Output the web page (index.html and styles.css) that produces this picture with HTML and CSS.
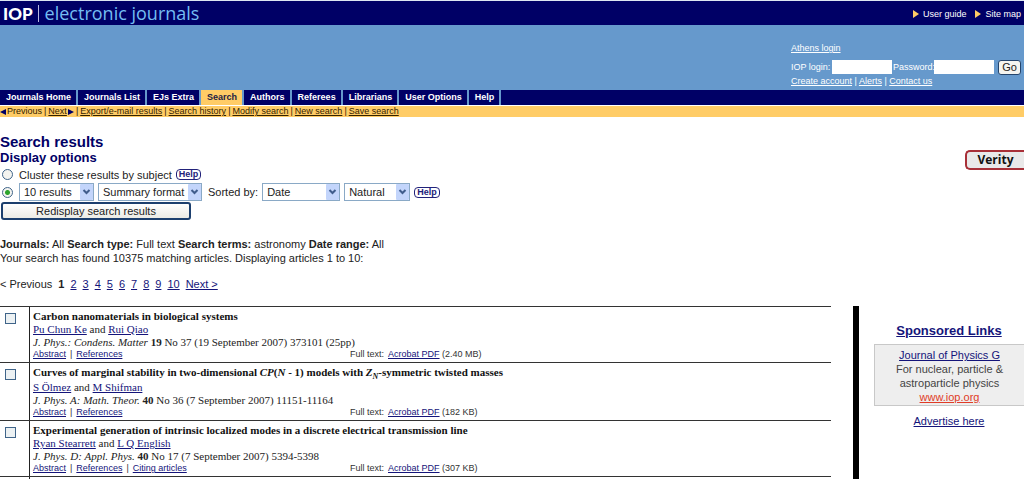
FILE: index.html
```html
<!DOCTYPE html>
<html lang="en">
<head>
<meta charset="utf-8">
<title>IOP electronic journals - Search results</title>
<link rel="stylesheet" href="styles.css">
</head>
<body>
<header>
  <div class="brandbar">
    <div class="brand"><strong class="iop">IOP</strong><span class="brand-name">electronic journals</span></div>
    <div class="toplinks">
      <a href="#"><svg class="tri" viewBox="0 0 6 8"><path d="M0 0L6 4L0 8Z"/></svg>User guide</a>
      <a href="#"><svg class="tri" viewBox="0 0 6 8"><path d="M0 0L6 4L0 8Z"/></svg>Site map</a>
    </div>
  </div>
  <div class="banner">
    <form class="login">
      <div><a href="#">Athens login</a></div>
      <div class="login-row">
        <label for="user">IOP login:</label><input id="user" type="text">
        <label class="pw" for="pass">Password:</label><input id="pass" type="password">
        <button type="button" class="go">Go</button>
      </div>
      <div class="login-links"><a href="#">Create account</a> | <a href="#">Alerts</a> | <a href="#">Contact us</a></div>
    </form>
  </div>
  <nav class="tabs">
    <a href="#">Journals Home</a><a href="#">Journals List</a><a href="#">EJs Extra</a><a href="#" class="active">Search</a><a href="#">Authors</a><a href="#">Referees</a><a href="#">Librarians</a><a href="#">User Options</a><a href="#">Help</a>
  </nav>
  <nav class="subnav">
    <svg class="arrow" viewBox="0 0 6 6"><path d="M6 0L0 3L6 6Z"/></svg><span>Previous</span><i>|</i><a href="#">Next</a><svg class="arrow" viewBox="0 0 6 6"><path d="M0 0L6 3L0 6Z"/></svg><i>|</i><a href="#">Export/e-mail results</a><i>|</i><a href="#">Search history</a><i>|</i><a href="#">Modify search</a><i>|</i><a href="#">New search</a><i>|</i><a href="#">Save search</a>
  </nav>
</header>

<main>
  <div class="top">
    <form class="options">
      <h1>Search results</h1>
      <h2>Display options</h2>
      <div class="opt cluster">
        <input type="radio" name="mode" id="m1"><label for="m1">Cluster these results by subject</label>
        <a href="#" class="help">Help</a>
      </div>
      <div class="opt">
        <input type="radio" name="mode" id="m2" aria-label="List results" checked>
        <select class="s-count" aria-label="Results per page"><option>10 results</option></select>
        <select class="s-format" aria-label="Format"><option>Summary format</option></select>
        <label class="sorted" for="sort">Sorted by:</label>
        <select class="s-sort" id="sort"><option>Date</option></select>
        <select class="s-order" aria-label="Order"><option>Natural</option></select>
        <a href="#" class="help">Help</a>
      </div>
      <button type="button" class="redisplay">Redisplay search results</button>
    </form>
    <a href="#" class="verity">Verity</a>
  </div>

  <div class="summary">
    <p><b>Journals:</b> All <b>Search type:</b> Full text <b>Search terms:</b> astronomy <b>Date range:</b> All</p>
    <p>Your search has found 10375 matching articles. Displaying articles 1 to 10:</p>
  </div>
  <nav class="pager">
    <span>&lt; Previous</span><b>1</b><a href="#">2</a><a href="#">3</a><a href="#">4</a><a href="#">5</a><a href="#">6</a><a href="#">7</a><a href="#">8</a><a href="#">9</a><a href="#">10</a><a href="#">Next &gt;</a>
  </nav>

  <div class="columns">
    <div class="results">
      <article>
        <div class="pick"><input type="checkbox" aria-label="Select article 1"></div>
        <div class="entry">
          <h3>Carbon nanomaterials in biological systems</h3>
          <p><a href="#">Pu Chun Ke</a> and <a href="#">Rui Qiao</a></p>
          <p class="cite"><em>J. Phys.: Condens. Matter</em> <b>19</b> No 37 (19 September 2007) 373101 (25pp)</p>
          <div class="meta"><div class="links"><a href="#">Abstract</a><i>|</i><a href="#">References</a></div><div><span class="ft">Full text:</span><a href="#">Acrobat PDF</a> (2.40 MB)</div></div>
        </div>
      </article>
      <article>
        <div class="pick"><input type="checkbox" aria-label="Select article 2"></div>
        <div class="entry">
          <h3 class="formula">Curves of marginal stability in two-dimensional <em>CP</em>(<em>N</em> - 1) models with <em>Z<sub>N</sub></em>-symmetric twisted masses</h3>
          <p><a href="#">S Ölmez</a> and <a href="#">M Shifman</a></p>
          <p class="cite"><em>J. Phys. A: Math. Theor.</em> <b>40</b> No 36 (7 September 2007) 11151-11164</p>
          <div class="meta"><div class="links"><a href="#">Abstract</a><i>|</i><a href="#">References</a></div><div><span class="ft">Full text:</span><a href="#">Acrobat PDF</a> (182 KB)</div></div>
        </div>
      </article>
      <article>
        <div class="pick"><input type="checkbox" aria-label="Select article 3"></div>
        <div class="entry">
          <h3>Experimental generation of intrinsic localized modes in a discrete electrical transmission line</h3>
          <p><a href="#">Ryan Stearrett</a> and <a href="#">L Q English</a></p>
          <p class="cite"><em>J. Phys. D: Appl. Phys.</em> <b>40</b> No 17 (7 September 2007) 5394-5398</p>
          <div class="meta"><div class="links"><a href="#">Abstract</a><i>|</i><a href="#">References</a><i>|</i><a href="#">Citing articles</a></div><div><span class="ft">Full text:</span><a href="#">Acrobat PDF</a> (307 KB)</div></div>
        </div>
      </article>
      <div class="more"></div>
    </div>
    <aside>
      <h2><a href="#">Sponsored Links</a></h2>
      <div class="ad"><a href="#">Journal of Physics G</a><br>For nuclear, particle &amp;<br>astroparticle physics<br><a href="#" class="url">www.iop.org</a></div>
      <a href="#">Advertise here</a>
    </aside>
  </div>
</main>
</body>
</html>
```

FILE: styles.css
```css
* { box-sizing: border-box; }
html, body { height: 100%; }
body {
  margin: 0;
  display: flex;
  flex-direction: column;
  overflow: hidden;
  background: #fff;
  color: #222;
  font: 11px/14px "Liberation Sans", Arial, sans-serif;
}
h1, h2, h3, p { margin: 0; }
a { color: #14147a; }
i { font-style: normal; }
input { margin: 0; }

.brandbar {
  display: flex;
  justify-content: space-between;
  align-items: center;
  height: 25px;
  padding: 0 3px 0 3px;
  border-top: 1px solid #dde6f2;
  background: #000066;
}
.brand { display: flex; align-items: center; }
.iop {
  padding-right: 5px;
  border-right: 1px solid #b8b8e0;
  color: #fff;
  font: 900 17px/17px Lato, "Open Sans", sans-serif;
}
.brand-name {
  padding-left: 6px;
  color: #74bdf2;
  font: 18px/22px "Open Sans", sans-serif;
}
.toplinks { display: flex; gap: 9px; padding-top: 2px; font-size: 9px; line-height: 11px; }
.toplinks a { display: flex; align-items: center; color: #fff; text-decoration: none; }
.tri { width: 6px; height: 8px; margin-right: 4px; fill: #ffcc66; }

.banner {
  display: flex;
  justify-content: flex-end;
  height: 65px;
  padding: 18px 3px 0 0;
  background: #6699cc;
}
.login { width: 230px; color: #fff; font-size: 9px; line-height: 10px; }
.login a { color: #fff; }
.login-row { display: flex; align-items: center; height: 18px; margin-top: 5px; }
.login-row input { width: 60px; height: 14px; border: 0; padding: 0 2px; background: #fff; font-size: 9px; }
.login-row label { width: 41px; white-space: nowrap; }
.login-row .pw { width: 42px; padding-left: 1px; }
.go {
  width: 23px;
  height: 15px;
  margin-left: 4px;
  padding: 0;
  border: 1px solid #24446c;
  border-radius: 3px;
  background: #f4f4f0;
  color: #222;
  font: 11px/12px "Liberation Sans", sans-serif;
}

.tabs { display: flex; height: 15px; background: #000066; font-weight: bold; font-size: 9px; line-height: 15px; }
.tabs a {
  padding: 0 5px 0 6px;
  border-right: 2px solid #6699cc;
  color: #fff;
  text-decoration: none;
}
.tabs .active { background: #ffcc66; color: #222244; }
.subnav {
  display: flex;
  align-items: center;
  height: 11px;
  margin-top: 1px;
  background: #ffcc66;
  color: #332200;
  font-size: 9px;
  line-height: 11px;
}
.subnav a { color: #332200; }
.subnav i { margin: 0 2px; }
.arrow { width: 6px; height: 6px; margin: 0 1px 0 0; fill: #000066; }
a + .arrow { margin: 0 0 0 1px; }

main { flex: 1; display: flex; flex-direction: column; min-height: 0; padding-top: 16px; }
.top { display: flex; justify-content: space-between; align-items: flex-start; }
h1 { color: #000066; font-size: 15px; line-height: 17px; }
h2 { color: #000066; font-size: 13px; line-height: 15px; }
.opt { display: flex; align-items: center; height: 18px; gap: 4px; }
.cluster { height: 17px; margin-top: 1px; }
.opt input {
  appearance: none;
  width: 11px;
  height: 11px;
  margin: 0 2px 0 2px;
  border: 1px solid #3f6489;
  border-radius: 50%;
  background: #f4f4f0;
}
.opt input:checked { background: radial-gradient(circle, #2ba32b 0 2px, #f4f4f0 3px); }
select {
  appearance: none;
  height: 18px;
  padding: 0 0 0 4px;
  border: 1px solid #8aa9c6;
  border-radius: 0;
  color: #222;
  font: 11px/14px "Liberation Sans", sans-serif;
  background:
    url("data:image/svg+xml,%3Csvg xmlns='http://www.w3.org/2000/svg' width='13' height='16'%3E%3Crect width='13' height='16' rx='1' fill='%23c3d5fb'/%3E%3Cpath d='M3.5 6L6.500 9L9.500 6' fill='none' stroke='%23405d8c' stroke-width='2'/%3E%3C/svg%3E") right 0 center no-repeat #fff;
}
.s-count { width: 75px; }
.s-format { width: 104px; }
.s-sort { width: 78px; }
.s-order { width: 66px; }
.sorted { margin-left: 2px; }
.help {
  height: 11px;
  padding: 0 2px;
  border: 1px solid #22227a;
  border-radius: 4px;
  color: #22227a;
  font-weight: bold;
  font-size: 9px;
  line-height: 9px;
  text-decoration: none;
}
.redisplay {
  display: block;
  width: 190px;
  height: 18px;
  margin: 1px 0 0 1px;
  padding: 0;
  border: 2px solid #1c3f6e;
  border-radius: 3px;
  background: linear-gradient(#fff, #ecebe5);
  color: #222;
  font: 11px/13px "Liberation Sans", sans-serif;
}
.verity {
  width: 59px;
  margin-top: 17px;
  border: 2px solid #a83038;
  border-right: 0;
  border-radius: 5px 0 0 5px;
  background: #e9e9e9;
  color: #111;
  font: bold 12px/16px "Open Sans", sans-serif;
  text-align: center;
  text-decoration: none;
}

.summary { margin-top: 17px; }
.pager { display: flex; gap: 6px; margin-top: 12px; }

.columns { flex: 1; display: flex; min-height: 0; margin-top: 15px; }
.results {
  flex: 1;
  display: flex;
  flex-direction: column;
  margin-right: 22px;
  font: 11px/13px "Liberation Serif", "Times New Roman", serif;
}
article { display: flex; border-top: 1px solid #333; }
.pick { width: 30px; padding: 6px 0 0 5px; border-right: 1px solid #222; }
.pick input {
  appearance: none;
  display: block;
  width: 11px;
  height: 11px;
  border: 1px solid #3f6489;
  background: #ecf1f3;
}
.entry { flex: 1; padding: 3px 0 2px 3px; }
h3 { color: #111; font-size: 11px; line-height: 13px; }
.formula { padding-bottom: 2px; }
sub { font-size: 8px; line-height: 0; vertical-align: -3px; }
.meta { display: flex; color: #333; font: 9px/11px "Liberation Sans", Arial, sans-serif; }
.links { width: 317px; }
.links i { margin: 0 4px; }
.ft { margin-right: 4px; }
.more {
  flex: 1;
  border-top: 1px solid #333;
  background: linear-gradient(#222, #222) 29px 0 / 1px 100% no-repeat;
}

aside { width: 171px; padding: 17px 0 0 15px; border-left: 6px solid #000; text-align: center; }
aside h2 { line-height: 16px; }
.ad {
  margin: 5px 0 8px;
  padding: 3px 0 1px;
  border: 1px solid #c8c8c8;
  border-right: 0;
  background: #eee;
  color: #444;
}
.ad .url { color: #e03c28; }
```
